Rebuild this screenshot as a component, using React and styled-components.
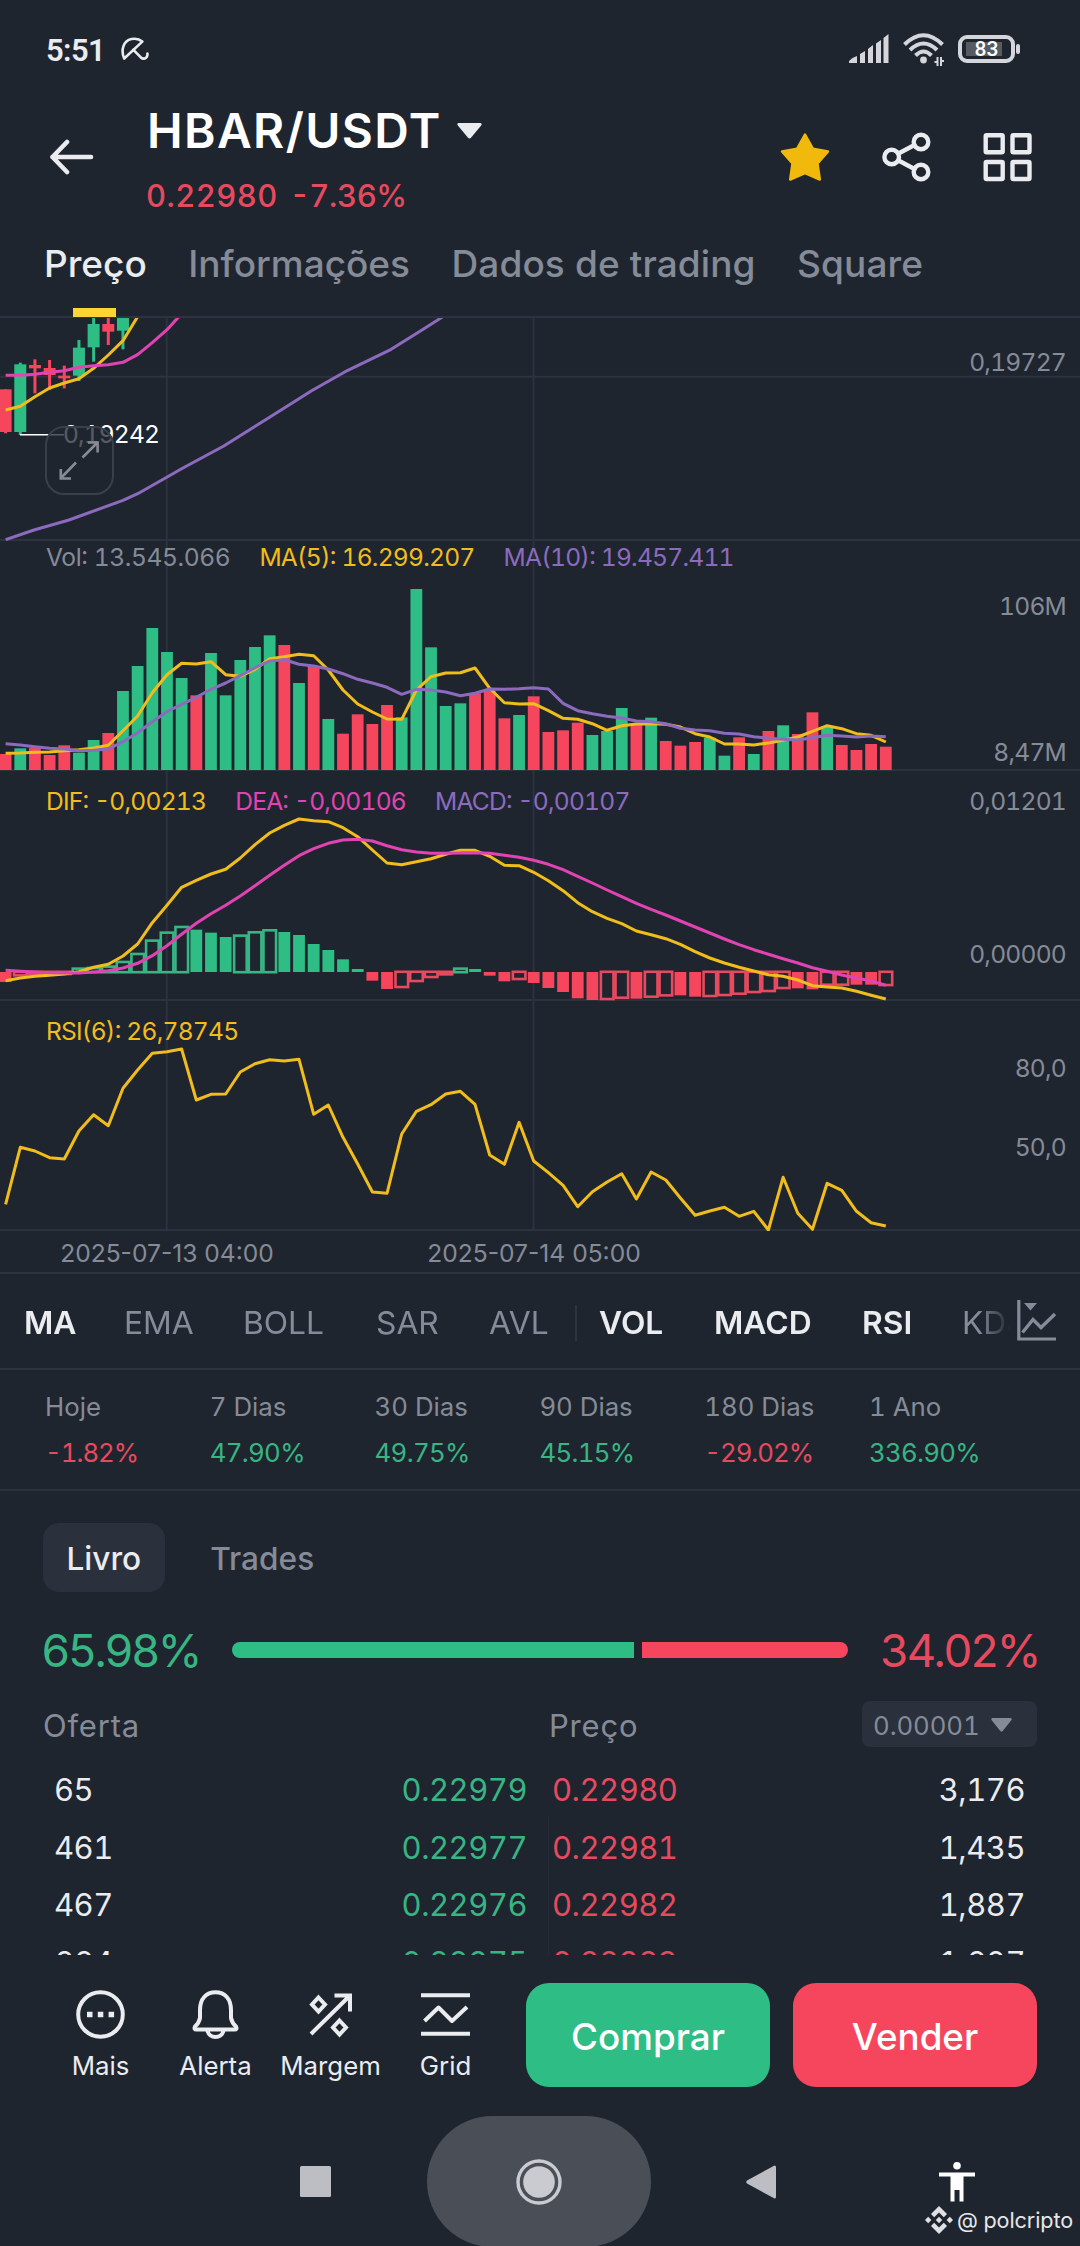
import React from "react";
import styled, { createGlobalStyle, css } from "styled-components";

const GREEN = "#2ebd85";
const RED = "#f6465d";
const YELLOW = "#f0bd1c";
const PINK = "#e243b3";
const PURPLE = "#8c6bbf";
const GRAY = "#858b97";
const WHITE = "#eaecef";
const BG = "#1f252f";
const LINE = "#2c323e";

const GlobalStyle = createGlobalStyle`
  body {
    margin: 0;
    background: ${BG};
  }
  * {
    box-sizing: border-box;
  }
  svg {
    display: block;
  }
`;

const Screen = styled.div`
  position: relative;
  width: 1080px;
  height: 2246px;
  overflow: hidden;
  background: ${BG};
  color: ${WHITE};
  font-family: "Inter", sans-serif;
  font-variant-numeric: tabular-nums;
  white-space: nowrap;
`;

/* ---------- status bar ---------- */

const StatusBar = styled.div`
  display: flex;
  align-items: center;
  height: 98px;
  padding: 0 60px 0 46px;
  font-family: "Roboto", sans-serif;
`;

const Clock = styled.span`
  margin-right: 16px;
  padding-top: 2px;
  font-size: 31px;
  font-weight: 600;
  letter-spacing: -0.6px;
`;

const StatusIcons = styled.div`
  display: flex;
  align-items: center;
  gap: 14px;
  margin-left: auto;
`;

const Battery = styled.div`
  display: flex;
  align-items: center;
  gap: 1px;

  &::after {
    content: "";
    width: 4px;
    height: 10px;
    border-radius: 2px;
    background: #d4d6db;
  }
`;

const BatteryBody = styled.div`
  display: flex;
  align-items: center;
  justify-content: center;
  width: 57px;
  height: 28px;
  border: 4px solid #d4d6db;
  border-radius: 9px;
  background: linear-gradient(#555a63, #555a63) 4px center / 36px 14px no-repeat;
  color: #fff;
  font-size: 21px;
  font-weight: 500;
  line-height: 20px;
`;

/* ---------- header ---------- */

const Header = styled.header`
  display: flex;
  align-items: flex-start;
  height: 132px;
  padding: 0 48px 0 49px;
`;

const HeaderIcons = styled.div`
  display: flex;
  align-items: center;
  gap: 52px;
  height: 118px;
`;

const Pair = styled.div`
  flex: 1;
  margin-left: 53px;
  padding-top: 1px;
`;

const PairName = styled.div`
  display: flex;
  align-items: center;
  gap: 15px;
  height: 64px;
  color: #fff;
  font-size: 47.8px;
  font-weight: 600;
  letter-spacing: 1.4px;
`;

const PairPrice = styled.div`
  display: flex;
  gap: 12px;
  margin-left: -1px;
  line-height: 66px;
  color: #e64a5e;
  font-size: 31px;
  font-weight: 500;
  letter-spacing: 0.4px;
  font-feature-settings: "case";
`;

const Change = styled.span`
  letter-spacing: -0.4px;
`;

const Tabs = styled.nav`
  display: flex;
  gap: 41.5px;
  height: 88px;
  padding-left: 44px;
  border-bottom: 2px solid ${LINE};
`;

const Tab = styled.span`
  position: relative;
  height: 87px;
  line-height: 67px;
  font-size: 37px;
  font-weight: 500;
  color: ${(p) => (p.$active ? WHITE : GRAY)};

  &:nth-child(n + 3) {
    letter-spacing: 0.1px;
  }

  ${(p) =>
    p.$active &&
    css`
      &::after {
        content: "";
        position: absolute;
        left: 50%;
        bottom: 0;
        width: 43px;
        height: 9px;
        margin-left: -22px;
        background: #fcd535;
      }
    `}
`;

/* ---------- charts ---------- */

const Panel = styled.section`
  position: relative;
  height: ${(p) => p.$height}px;
  font-size: 24.6px;
  line-height: 30px;
  letter-spacing: -0.78px;
  font-feature-settings: "case";
`;

const Legend = styled.div`
  position: absolute;
  top: ${(p) => p.$top}px;
  left: 46px;
  display: flex;
  gap: 29px;
`;

const LegendItem = styled.span`
  color: ${(p) => p.$color};
  letter-spacing: ${(p) => (p.$loose ? "-0.4px" : "inherit")};
`;

const AxisLabel = styled.span`
  position: absolute;
  top: ${(p) => p.$top}px;
  right: 14px;
  color: ${GRAY};
`;

const LowPrice = styled.span`
  position: absolute;
  top: 101px;
  left: 63px;
  color: #fff;
  letter-spacing: -0.9px;
`;

const ExpandButton = styled.div`
  position: absolute;
  top: 108px;
  left: 45px;
  width: 69px;
  height: 69px;
  border: 2px solid #3a404b;
  border-radius: 19px;
  background: rgba(31, 37, 47, 0.75);
`;

const Dates = styled.div`
  display: flex;
  height: 44px;
  padding-left: 53px;
  gap: 139px;
  border-bottom: 2px solid ${LINE};
  color: ${GRAY};
  font-size: 24.6px;
  font-variant-numeric: normal;
  line-height: 46px;
  font-feature-settings: "case";
`;

const DateLabel = styled.span`
  width: 228px;
  text-align: center;
`;

/* ---------- indicators and stats ---------- */

const Indicators = styled.div`
  display: flex;
  align-items: center;
  justify-content: space-between;
  height: 96px;
  padding: 0 23px 0 24px;
  border-bottom: 2px solid ${LINE};
`;

const IndicatorList = styled.div`
  display: flex;
  align-items: center;
  width: 986px;
  overflow: hidden;
  font-size: 31.8px;
  line-height: 48px;
  padding-top: 3px;
  mask-image: linear-gradient(to right, #000 955px, transparent 986px);
`;

const Indicator = styled.span`
  flex: none;
  width: ${(p) => p.$width}px;
  font-weight: ${(p) => (p.$active ? 600 : 400)};
  color: ${(p) => (p.$active ? WHITE : GRAY)};
`;

const Separator = styled.span`
  flex: none;
  width: 2px;
  height: 36px;
  margin-right: 22px;
  background: ${LINE};
`;

const Stats = styled.div`
  display: flex;
  height: 121px;
  padding: 14px 0 0 45px;
  border-bottom: 2px solid ${LINE};
`;

const Stat = styled.div`
  display: flex;
  flex-direction: column;
  width: 164.8px;
  font-size: 25.8px;
  line-height: 46px;
`;

const StatLabel = styled.span`
  color: ${GRAY};
`;

const StatValue = styled.span`
  color: ${(p) => (p.$down ? "#e64a5e" : "#37b583")};
  letter-spacing: ${(p) => (p.$down ? -1 : -0.7)}px;
  font-feature-settings: "case";
`;

/* ---------- order book ---------- */

const Book = styled.section`
  height: 464px;
  padding: 32px 43px 0;
  overflow: hidden;
`;

const BookTabs = styled.div`
  display: flex;
  gap: 22px;
`;

const BookTab = styled.span`
  height: 69px;
  padding: 0 23.5px;
  border-radius: 16px;
  background: ${(p) => (p.$active ? "#2a303c" : "transparent")};
  color: ${(p) => (p.$active ? WHITE : GRAY)};
  font-size: 31.6px;
  font-weight: 500;
  line-height: 72px;
`;

const Ratio = styled.div`
  display: flex;
  align-items: center;
  justify-content: space-between;
  height: 60px;
  margin: 28px -2px 0;
  font-size: 45.5px;
`;

const RatioValue = styled.span`
  width: 162px;
  color: ${(p) => p.$color};
  letter-spacing: -2.7px;

  &:last-child {
    padding-left: 3px;
  }
`;

const RatioBar = styled.div`
  display: flex;
  gap: 8px;
  width: 616px;
  height: 16px;
  margin-left: 26px;
  margin-right: 26px;
  border-radius: 8px;
  overflow: hidden;
`;

const RatioPart = styled.div`
  flex: ${(p) => p.$share};
  background: ${(p) => p.$color};
`;

const BookHead = styled.div`
  display: flex;
  align-items: center;
  height: 46px;
  margin-top: 21px;
  color: ${GRAY};
  font-size: 31px;
  letter-spacing: 0.8px;
`;

const BookHeadCell = styled.span`
  width: 506px;
  padding-top: 3px;
`;

const Precision = styled.span`
  flex: none;
  display: flex;
  align-items: center;
  justify-content: space-between;
  width: 175px;
  height: 46px;
  margin-left: -193px;
  padding: 2px 25px 0 11px;
  border-radius: 8px;
  background: #2a303c;
  font-size: 25.8px;
  letter-spacing: -0.1px;
`;

const Orders = styled.div`
  display: grid;
  grid-template-columns: 1fr 1fr;
  margin-top: 14px;
`;

const Side = styled.div`
  padding: 0 13px 0 11px;

  & + & {
    padding: 0 12px;
    background: linear-gradient(#252b36, #252b36) 8px 54px / 1px 100% no-repeat;
  }
`;

const Order = styled.div`
  display: flex;
  justify-content: space-between;
  height: 57.6px;
  line-height: 57.6px;
  font-size: 31px;
  letter-spacing: -0.5px;
`;

const OrderPrice = styled.span`
  color: ${(p) => (p.$ask ? "#e64a5e" : "#37b583")};
`;

/* ---------- bottom ---------- */

const ActionBar = styled.div`
  display: flex;
  height: 161px;
  padding: 28px 43px 0;
`;

const Action = styled.div`
  display: flex;
  flex-direction: column;
  align-items: center;
  gap: 12px;
  width: 115px;
  padding-top: 7px;
  font-size: 25.8px;
  line-height: 30px;
`;

const TradeButton = styled.button`
  width: 244px;
  height: 104px;
  margin-left: 23px;
  padding: 2px 0 0;
  border: 0;
  border-radius: 23px;
  background: ${(p) => p.$color};
  color: #fff;
  font: 500 36.8px "Inter", sans-serif;
`;

const NavBar = styled.div`
  display: flex;
  height: 131px;
  padding-left: 204px;
`;

const NavSlot = styled.div`
  display: flex;
  align-items: center;
  justify-content: center;
  width: ${(p) => p.$width}px;
  height: 131px;
  border-radius: 66px;
  background: ${(p) => (p.$pressed ? "#4a4e57" : "transparent")};
`;

const Watermark = styled.div`
  position: absolute;
  right: 7px;
  top: 2205px;
  display: flex;
  align-items: center;
  gap: 4px;
  color: #e6e7e9;
  font-size: 21.6px;
  line-height: 30px;
  letter-spacing: -0.1px;
`;

/* ---------- data ---------- */

const STEP = 14.67;
const cx = (i) => 5.6 + i * STEP;

// distances from the panel's origin, in thirds of a pixel
const third = (v) => v / 3;
const toPoints = (values) =>
  values.map((v, i) => `${cx(i).toFixed(1)},${third(v).toFixed(1)}`).join(" ");

const candles = [
  [RED, 238, 366, 238, 370],
  [GREEN, 163, 366, 158, 375],
  [RED, 165, 175, 148, 250],
  [RED, 174, 195, 150, 240],
  [RED, 197, 205, 167, 235],
  [GREEN, 113, 197, 90, 213],
  [GREEN, 42, 112, 20, 155],
  [RED, 42, 65, 20, 105],
  [GREEN, 20, 62, 20, 118],
];
const priceMa = [300, 289, 260, 234, 219, 206, 175, 135, 92, 20];
const priceMaMid = [196, 196, 193, 187, 182, 172, 167, 164, 157, 134, 98, 59, 11];
const priceMaLong =
  "5.6,229.7 34,220 69,210 123,190.3 137.7,183.7 166.7,167.3 182.5,158.3 223.8,136 268,108.3 311.6,80.7 347.8,60.3 391.2,39.3 420,21.3 442,7.3 450,2";

const volume = [
  582, 565, 563, 585, 556, 578, 540, 519, 393, 318, 204, 276, 354, 406, 279, 406,
  300, 261, 226, 255, 369, 318, 477, 521, 463, 492, 435, 472, 87, 262, 438, 430,
  400, 392, 475, 465, 409, 516, 511, 488, 525, 513, 444, 492, 473, 543, 557, 546,
  533, 587, 532, 582, 513, 496, 522, 457, 500, 555, 570, 552, 560,
];
const volumeSide =
  "RGRRRGGRGGGGGRGGGGGRGRGRRRRGGGGGRRRGRRRRGGGRGRRRGGRGRGRRGRRRR";
const volumeMa5 = [
  580, 579, 577, 576, 572, 569, 564, 556, 512, 468, 398, 344, 310, 312, 305, 344,
  349, 328, 296, 290, 283, 287, 330, 390, 432, 456, 477, 478, 390, 350, 339, 338,
  324, 385, 428, 432, 431, 452, 475, 478, 491, 511, 497, 492, 491, 493, 501, 521,
  531, 552, 552, 555, 549, 541, 531, 514, 497, 506, 521, 526, 546,
];
const volumeMa10 = [
  551, 555, 560, 565, 567, 572, 571, 567, 545, 518, 485, 455, 433, 412, 388, 369,
  347, 323, 303, 299, 313, 318, 327, 341, 358, 369, 382, 403, 388, 390, 396, 407,
  400, 387, 388, 386, 383, 387, 430, 452, 461, 469, 474, 483, 485, 491, 505, 510,
  512, 520, 522, 530, 535, 538, 540, 533, 526, 528, 531, 528, 530,
];

const histogram = [
  606, 590, 587, 587, 586, 562, 560, 556, 542, 518, 478, 454, 437, 449, 458, 471,
  463, 453, 447, 456, 465, 492, 510, 538, 567, 602, 627, 625, 607, 595, 587, 562,
  567, 587, 604, 601, 609, 624, 636, 655, 660, 661, 657, 656, 654, 650, 646, 650,
  652, 649, 645, 640, 637, 628, 625, 628, 618, 618, 614, 614, 619,
];
// indexes of the bars drawn as outlines
const hollow = new Set([
  1, 2, 3, 4, 5, 6, 7, 8, 9, 10, 11, 12, 16, 17, 18, 27, 28, 29, 30, 31, 35, 41,
  42, 44, 45, 48, 49, 50, 51, 52, 53, 56, 57, 60,
]);
const dif = [
  602, 594, 589, 586, 582, 575, 562, 553, 528, 492, 428, 376, 322, 301, 282, 268,
  234, 194, 159, 136, 117, 122, 125, 143, 170, 210, 249, 254, 245, 236, 223, 211,
  211, 229, 256, 257, 277, 302, 332, 368, 395, 415, 431, 453, 464, 476, 493, 515,
  534, 549, 562, 573, 584, 589, 600, 617, 621, 624, 634, 646, 657,
];
const dea = [
  571, 574, 576, 578, 579, 579, 576, 572, 564, 550, 527, 497, 463, 430, 401, 376,
  348, 317, 286, 256, 227, 206, 190, 180, 178, 183, 197, 209, 216, 220, 220, 219,
  218, 220, 226, 232, 241, 253, 269, 289, 309, 330, 350, 370, 388, 405, 423, 441,
  459, 477, 494, 509, 523, 536, 549, 563, 574, 585, 594, 603, 616,
];
const rsi = [
  613, 442, 453, 473, 477, 393, 344, 377, 265, 210, 160, 155, 147, 300, 283, 282,
  216, 191, 179, 183, 178, 343, 315, 412, 492, 576, 580, 402, 334, 314, 282, 274,
  313, 465, 493, 367, 483, 518, 556, 620, 575, 546, 521, 597, 516, 540, 594, 646,
  633, 622, 649, 634, 690, 532, 640, 688, 550, 571, 634, 668, 678,
];

const stats = [
  ["Hoje", "-1.82%", true],
  ["7 Dias", "47.90%"],
  ["30 Dias", "49.75%"],
  ["90 Dias", "45.15%"],
  ["180 Dias", "-29.02%", true],
  ["1 Ano", "336.90%"],
];

const bids = [
  ["65", "0.22979"],
  ["461", "0.22977"],
  ["467", "0.22976"],
  ["664", "0.22975"],
];
const asks = [
  ["0.22980", "3,176"],
  ["0.22981", "1,435"],
  ["0.22982", "1,887"],
  ["0.22983", "1,607"],
];

/* ---------- drawings ---------- */

const Curve = ({ points, color }) => (
  <polyline
    points={points}
    fill="none"
    stroke={color}
    strokeWidth="3"
    strokeLinejoin="round"
  />
);

const GridLines = ({ top, bottom }) => (
  <g stroke={LINE} strokeWidth="2">
    <path d={`M166.7 ${top}V${bottom}M533.5 ${top}V${bottom}`} />
    <path d={`M0 ${bottom}H1080`} />
  </g>
);

function PriceChart() {
  return (
    <svg width="1080" height="223" viewBox="0 8 1080 223">
      <GridLines top={8} bottom={230} />
      <path d="M0 66.7H1080" stroke={LINE} strokeWidth="2" />
      {candles.map(([color, top, bottom, high, low], i) => (
        <g key={i} fill={color}>
          <rect x={cx(i) - 6} y={third(top)} width="12" height={third(bottom - top)} />
          <rect x={cx(i) - 1.5} y={third(high)} width="3" height={third(low - high)} />
        </g>
      ))}
      <path d="M20 124.7H64" stroke="#fff" strokeWidth="1.6" />
      <Curve points={toPoints(priceMa)} color={YELLOW} />
      <Curve points={toPoints(priceMaMid)} color={PINK} />
      <Curve points={priceMaLong} color={PURPLE} />
    </svg>
  );
}

function VolumeChart() {
  return (
    <svg width="1080" height="231" viewBox="0 -20 1080 231">
      <GridLines top={-20} bottom={210} />
      {volume.map((v, i) => (
        <rect
          key={i}
          x={cx(i) - 5.9}
          y={third(v)}
          width="11.8"
          height={third(630 - v)}
          fill={volumeSide[i] === "G" ? GREEN : RED}
        />
      ))}
      <Curve points={toPoints(volumeMa5)} color={YELLOW} />
      <Curve points={toPoints(volumeMa10)} color={PURPLE} />
    </svg>
  );
}

function MacdBar({ index, value }) {
  const up = value < 576;
  const color = up ? GREEN : RED;
  const edge = third(value);
  if (hollow.has(index)) {
    const top = up ? edge + 1.3 : 191.8;
    const bottom = up ? 192.2 : edge - 1.3;
    return (
      <rect
        x={cx(index) - 6.2}
        y={top}
        width="12.6"
        height={Math.max(bottom - top, 1)}
        fill="none"
        stroke={up ? "#37b583" : "#e64a5e"}
        strokeWidth="2.6"
      />
    );
  }
  return (
    <rect
      x={cx(index) - 5.9}
      y={up ? edge : 192}
      width="11.8"
      height={Math.abs(192 - edge)}
      fill={color}
    />
  );
}

function MacdChart() {
  return (
    <svg width="1080" height="231" viewBox="0 -10 1080 231">
      <GridLines top={-10} bottom={220} />
      {histogram.map((v, i) => (
        <MacdBar key={i} index={i} value={v} />
      ))}
      <Curve points={toPoints(dif)} color={YELLOW} />
      <Curve points={toPoints(dea)} color={PINK} />
    </svg>
  );
}

function RsiChart() {
  return (
    <svg width="1080" height="231" viewBox="0 0 1080 231">
      <GridLines top={0} bottom={230} />
      <Curve points={toPoints(rsi)} color={YELLOW} />
    </svg>
  );
}

const Stroke = ({ width, height, weight = 4, children }) => (
  <svg
    width={width}
    height={height}
    viewBox={`0 0 ${width} ${height}`}
    fill="none"
    stroke={WHITE}
    strokeWidth={weight}
    strokeLinecap="round"
    strokeLinejoin="round"
  >
    {children}
  </svg>
);

const UmbrellaIcon = () => (
  <Stroke width={28} height={24} weight={2.6}>
    <path d="M3.2 21.5C-0.4 13 2.2 4 10.5 2.1C14.5 1.2 18.5 2.2 21.3 4.6Z" />
    <path d="M12.4 12.8L19.6 20.2Q22.4 22.8 25 20.8Q26.8 19.2 26.4 16.6" />
  </Stroke>
);

const SignalIcon = () => (
  <svg width="40" height="30" viewBox="0 0 40 30" fill="#d4d6db">
    <path d="M0 29V27Q3 23.500 8 22V29ZM11 29V20L16 17V29ZM19 29V15L24 11V29ZM27 29V9.500L32 6V29ZM34.500 29V4L39.500 0V29Z" />
  </svg>
);

const WifiIcon = () => (
  <svg width="41" height="33" viewBox="0 0 41 33" fill="none" stroke="#d4d6db" strokeWidth="4">
    <path d="M1.500 11.500Q20.500 -7 39.500 11.500M7 17Q20.500 4 34 17M12.500 22.500Q20.500 14.500 28.500 22.500" />
    <circle cx="20.500" cy="27" r="3.400" fill="#d4d6db" stroke="none" />
    <path d="M34.500 24V33M38 24V33" strokeWidth="2" />
    <path d="M31.500 29H35M37.500 28H41" strokeWidth="2" />
  </svg>
);

const BackIcon = () => (
  <Stroke width={45} height={36} weight={4.6}>
    <path d="M42 18H3.500M18 3L3.500 18L18 33" />
  </Stroke>
);

const Caret = ({ width, height, color }) => (
  <svg width={width} height={height} viewBox="0 0 24 16" preserveAspectRatio="none">
    <path d="M1.500 0H22.500Q24.500 0.500 23.200 2.500L13.600 14.500Q12 16.500 10.400 14.500L0.800 2.500Q-0.500 0.500 1.500 0Z" fill={color} />
  </svg>
);

const StarIcon = () => (
  <svg width="50" height="50" viewBox="0 0 50 50">
    <path
      d="M25 2.500L32.800 16.700L48 19.500L37.500 31.500L39.800 47.500L25 41L10.200 47.500L12.500 31.500L2 19.500L17.200 16.700Z"
      fill="#f0b90b"
      stroke="#f0b90b"
      strokeWidth="2.500"
      strokeLinejoin="round"
    />
  </svg>
);

const ShareIcon = () => (
  <Stroke width={49} height={50} weight={4.4}>
    <circle cx="9.700" cy="25" r="7.300" />
    <circle cx="39" cy="10" r="7.300" />
    <circle cx="39" cy="40" r="7.300" />
    <path d="M16.500 21.500L32.500 13M16.500 28.500L32.500 37" />
  </Stroke>
);

const TilesIcon = () => (
  <Stroke width={49} height={50} weight={4.4}>
    <rect x="2.700" y="3.200" width="17" height="17" rx="1" />
    <rect x="29.500" y="3.200" width="17" height="17" rx="1" />
    <rect x="2.700" y="30" width="17" height="17" rx="1" />
    <rect x="29.500" y="30" width="17" height="17" rx="1" />
  </Stroke>
);

const ExpandIcon = () => (
  <svg width="65" height="65" viewBox="0 0 65 65" fill="none" stroke="#868b95" strokeWidth="2.600">
    <path d="M35.500 29.500L50 15M41 14.500H50.600V24.500M29 34.500L14 50M13.800 41V50.500H24" />
  </svg>
);

const ChartSettingsIcon = () => (
  <svg width="40" height="42" viewBox="0 0 40 42" fill="none" stroke={GRAY} strokeWidth="3.200">
    <path d="M1.800 0V39H39" />
    <path d="M5.500 32.500L16 19.500L24 27.500L38 14" strokeWidth="3.400" />
    <path d="M7 3H20L13.500 10.500Z" fill={GRAY} stroke="none" />
  </svg>
);

const MoreIcon = () => (
  <Stroke width={49} height={49} weight={4}>
    <circle cx="24.500" cy="24.500" r="22.300" />
    <path d="M11 24.500h5.500M21.800 24.500h5.500M32.600 24.500h5.500" strokeWidth="5.500" strokeLinecap="butt" />
  </Stroke>
);

const BellIcon = () => (
  <Stroke width={49} height={49} weight={4}>
    <path d="M9 20C9 9 15 2.200 24.500 2.200S40 9 40 20V28Q41 33 45 36.500Q46.500 39.500 43.500 39.500H5.500Q2.500 39.500 4 36.500Q8 33 9 28Z" />
    <path d="M16.500 40.500C18 49 31 49 32.500 40.500" />
  </Stroke>
);

const MarginIcon = () => (
  <Stroke width={49} height={49} weight={4}>
    <path d="M5 44L43.500 6M28.500 5.500H44V21.500" strokeLinecap="butt" strokeLinejoin="miter" />
    <path d="M12.500 7.500L19 14.500L12.500 21.500L6 14.500Z" strokeLinejoin="miter" />
    <path d="M33.500 30.500L40 37.500L33.500 44.500L27 37.500Z" strokeLinejoin="miter" />
  </Stroke>
);

const GridIcon = () => (
  <Stroke width={49} height={49} weight={4}>
    <path d="M0 5.300H49M0 43.700H49M3.500 31L17.500 17.500L31 31L46 17" strokeLinecap="butt" />
  </Stroke>
);

const SquareIcon = () => (
  <svg width="31" height="31">
    <rect width="31" height="31" rx="1.500" fill="#bcbec3" />
  </svg>
);

const HomeIcon = () => (
  <svg width="46" height="46" viewBox="0 0 46 46">
    <circle cx="23" cy="23" r="21" fill="none" stroke="#c9cbd0" strokeWidth="3.400" />
    <circle cx="23" cy="23" r="15.800" fill="#c9cbd0" />
  </svg>
);

const NavBackIcon = () => (
  <svg width="30" height="34" viewBox="0 0 30 34">
    <path d="M28.500 0.500Q30 0.500 30 2V32Q30 33.500 28.500 33.500L1 18.500Q-0.500 17 1 15.500Z" fill="#bcbec3" />
  </svg>
);

const AccessibilityIcon = () => (
  <svg width="36" height="40" viewBox="0 0 36 40" fill="#fff">
    <circle cx="18" cy="3.800" r="3.800" />
    <path d="M0 10.500H36V14.500H24.500V39.500H20.500V28H15.500V39.500H11.500V14.500H0Z" />
  </svg>
);

const BinanceIcon = () => (
  <svg width="28" height="28" viewBox="0 0 28 28" fill="#e0e1e4">
    <path d="M14 0L22 8L18.800 11.200L14 6.400L9.200 11.200L6 8Z" />
    <path d="M14 28L22 20L18.800 16.800L14 21.600L9.200 16.800L6 20Z" />
    <path d="M3.200 10.800L6.400 14L3.200 17.200L0 14ZM24.800 10.800L28 14L24.800 17.200L21.600 14ZM14 10.800L17.200 14L14 17.200L10.800 14Z" />
  </svg>
);

export default function App() {
  return (
    <>
      <GlobalStyle />
      <Screen>
        <StatusBar>
          <Clock>5:51</Clock>
          <UmbrellaIcon />
          <StatusIcons>
            <SignalIcon />
            <WifiIcon />
            <Battery>
              <BatteryBody>83</BatteryBody>
            </Battery>
          </StatusIcons>
        </StatusBar>

        <Header>
          <HeaderIcons>
            <BackIcon />
          </HeaderIcons>
          <Pair>
            <PairName>
              HBAR/USDT
              <Caret width={25} height={16} color={WHITE} />
            </PairName>
            <PairPrice>
              <span>0.22980</span>
              <Change>-7.36%</Change>
            </PairPrice>
          </Pair>
          <HeaderIcons>
            <StarIcon />
            <ShareIcon />
            <TilesIcon />
          </HeaderIcons>
        </Header>

        <Tabs>
          <Tab $active>Preço</Tab>
          <Tab>Informações</Tab>
          <Tab>Dados de trading</Tab>
          <Tab>Square</Tab>
        </Tabs>

        <Panel $height={222}>
          <PriceChart />
          <LowPrice>0,19242</LowPrice>
          <AxisLabel $top={29}>0,19727</AxisLabel>
          <ExpandButton>
            <ExpandIcon />
          </ExpandButton>
        </Panel>

        <Panel $height={230}>
          <VolumeChart />
          <Legend $top={2}>
            <LegendItem $color={GRAY} $loose>Vol: 13.545.066</LegendItem>
            <LegendItem $color={YELLOW}>MA(5): 16.299.207</LegendItem>
            <LegendItem $color={PURPLE}>MA(10): 19.457.411</LegendItem>
          </Legend>
          <AxisLabel $top={51}>106M</AxisLabel>
          <AxisLabel $top={197}>8,47M</AxisLabel>
        </Panel>

        <Panel $height={230}>
          <MacdChart />
          <Legend $top={16}>
            <LegendItem $color={YELLOW}>DIF: -0,00213</LegendItem>
            <LegendItem $color={PINK}>DEA: -0,00106</LegendItem>
            <LegendItem $color={PURPLE}>MACD: -0,00107</LegendItem>
          </Legend>
          <AxisLabel $top={16}>0,01201</AxisLabel>
          <AxisLabel $top={169}>0,00000</AxisLabel>
        </Panel>

        <Panel $height={230}>
          <RsiChart />
          <Legend $top={16}>
            <LegendItem $color={YELLOW}>RSI(6): 26,78745</LegendItem>
          </Legend>
          <AxisLabel $top={53}>80,0</AxisLabel>
          <AxisLabel $top={132}>50,0</AxisLabel>
        </Panel>

        <Dates>
          <DateLabel>2025-07-13 04:00</DateLabel>
          <DateLabel>2025-07-14 05:00</DateLabel>
        </Dates>

        <Indicators>
          <IndicatorList>
            <Indicator $width={100} $active>MA</Indicator>
            <Indicator $width={119}>EMA</Indicator>
            <Indicator $width={133}>BOLL</Indicator>
            <Indicator $width={113}>SAR</Indicator>
            <Indicator $width={86}>AVL</Indicator>
            <Separator />
            <Indicator $width={115} $active>VOL</Indicator>
            <Indicator $width={148} $active>MACD</Indicator>
            <Indicator $width={100} $active>RSI</Indicator>
            <Indicator $width={60}>KDJ</Indicator>
          </IndicatorList>
          <ChartSettingsIcon />
        </Indicators>

        <Stats>
          {stats.map(([label, value, down]) => (
            <Stat key={label}>
              <StatLabel>{label}</StatLabel>
              <StatValue $down={down}>{value}</StatValue>
            </Stat>
          ))}
        </Stats>

        <Book>
          <BookTabs>
            <BookTab $active>Livro</BookTab>
            <BookTab>Trades</BookTab>
          </BookTabs>

          <Ratio>
            <RatioValue $color="#37b583">65.98%</RatioValue>
            <RatioBar>
              <RatioPart $share={66.1} $color={GREEN} />
              <RatioPart $share={33.9} $color={RED} />
            </RatioBar>
            <RatioValue $color="#e64a5e">34.02%</RatioValue>
          </Ratio>

          <BookHead>
            <BookHeadCell>Oferta</BookHeadCell>
            <BookHeadCell>Preço</BookHeadCell>
            <Precision>
              0.00001
              <Caret width={21} height={14} color={GRAY} />
            </Precision>
          </BookHead>

          <Orders>
            <Side>
              {bids.map(([amount, price]) => (
                <Order key={price}>
                  <span>{amount}</span>
                  <OrderPrice>{price}</OrderPrice>
                </Order>
              ))}
            </Side>
            <Side>
              {asks.map(([price, amount]) => (
                <Order key={price}>
                  <OrderPrice $ask>{price}</OrderPrice>
                  <span>{amount}</span>
                </Order>
              ))}
            </Side>
          </Orders>
        </Book>

        <ActionBar>
          <Action>
            <MoreIcon />
            Mais
          </Action>
          <Action>
            <BellIcon />
            Alerta
          </Action>
          <Action>
            <MarginIcon />
            Margem
          </Action>
          <Action>
            <GridIcon />
            Grid
          </Action>
          <TradeButton $color={GREEN}>Comprar</TradeButton>
          <TradeButton $color={RED}>Vender</TradeButton>
        </ActionBar>

        <NavBar>
          <NavSlot $width={223}>
            <SquareIcon />
          </NavSlot>
          <NavSlot $width={224} $pressed>
            <HomeIcon />
          </NavSlot>
          <NavSlot $width={219}>
            <NavBackIcon />
          </NavSlot>
          <NavSlot $width={174}>
            <AccessibilityIcon />
          </NavSlot>
        </NavBar>

        <Watermark>
          <BinanceIcon />
          @ polcripto
        </Watermark>
      </Screen>
    </>
  );
}
